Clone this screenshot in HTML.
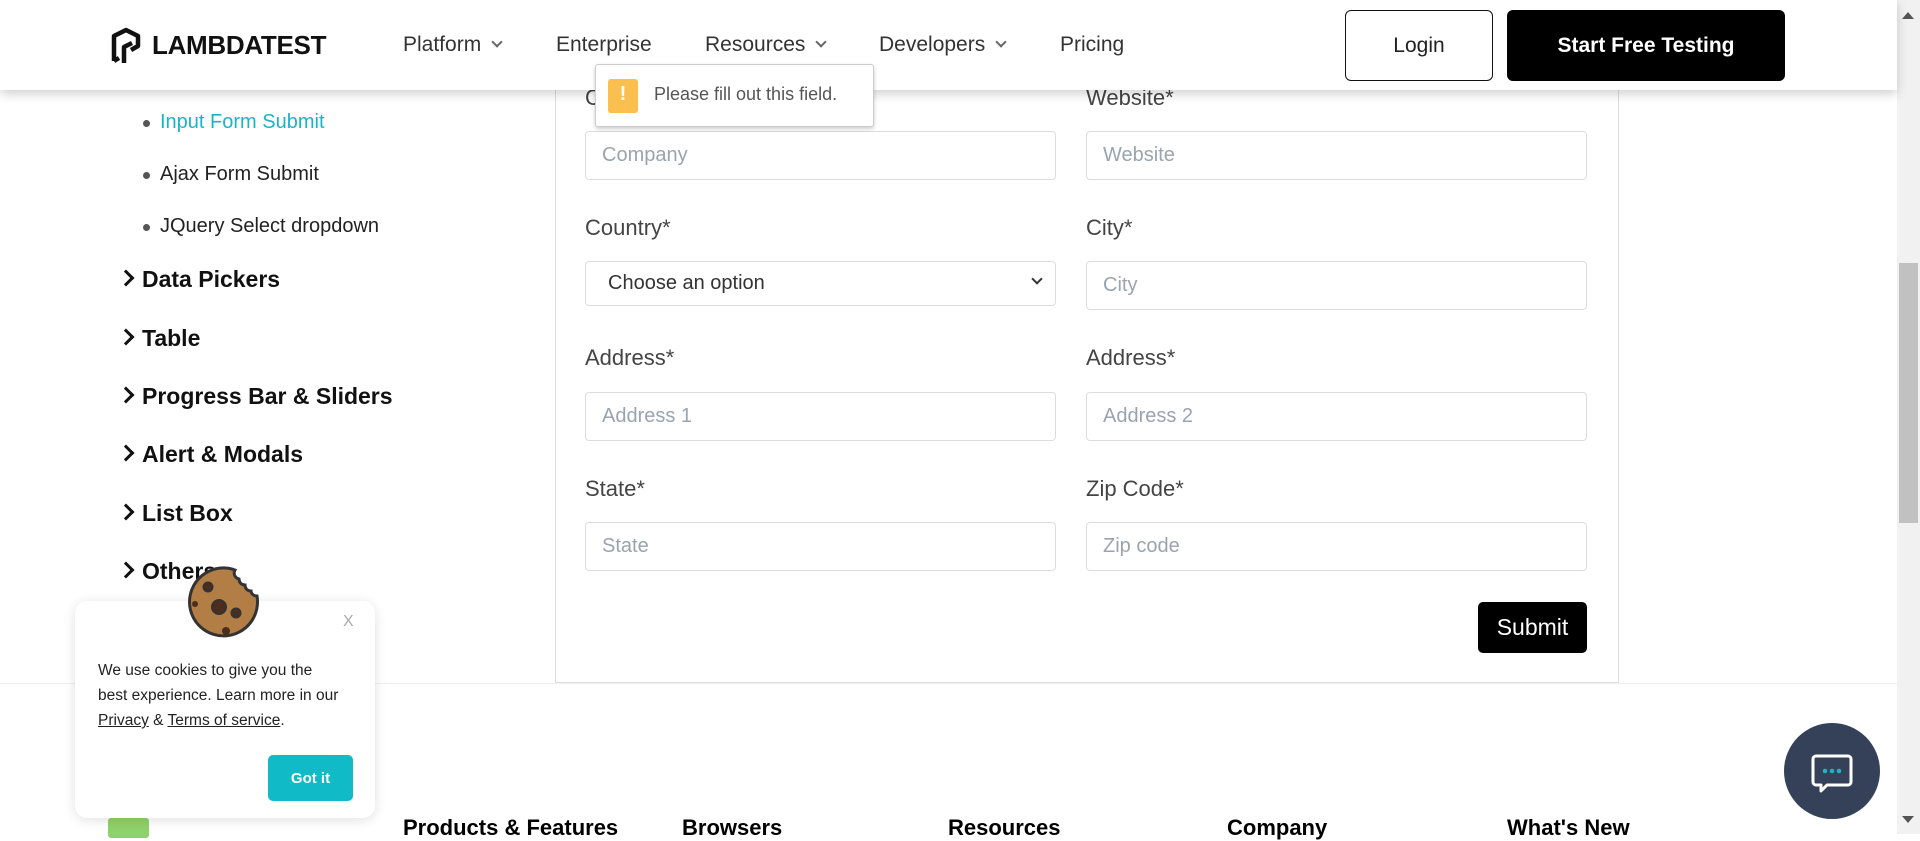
<!DOCTYPE html>
<html><head><meta charset="utf-8"><style>
*{box-sizing:border-box;margin:0;padding:0}
body{width:1920px;height:834px;overflow:hidden;background:#fff;font-family:"Liberation Sans",sans-serif;position:relative;color:#111}
.abs{position:absolute}
header{position:absolute;left:0;top:0;width:1897px;height:90px;background:#fff;box-shadow:0 4px 10px rgba(0,0,0,.18);z-index:5}
.nav{position:absolute;top:33px;font-size:21px;color:#333}
.chev{display:inline-block;width:8px;height:8px;border-right:2px solid #666;border-bottom:2px solid #666;transform:rotate(45deg);margin-left:12px;position:relative;top:-5px}
.btn{position:absolute;top:10px;height:71px;border-radius:6px;display:flex;align-items:center;justify-content:center;font-size:21px}
.sb{position:absolute;left:143px;width:7px;height:7px;border-radius:50%;background:#555}
.si{position:absolute;left:160px;font-size:20px;color:#222}
.cat{position:absolute;left:120px;font-size:23px;font-weight:bold;color:#111}
.cat:before{content:"";display:inline-block;width:9px;height:9px;border-right:3px solid #111;border-top:3px solid #111;transform:rotate(45deg);margin-right:10px;position:relative;top:-3px}
.lbl{position:absolute;font-size:22px;color:#444}
.inp{position:absolute;height:49px;border:1px solid #ddd;border-radius:4px;font-size:20px;color:#9aa3b0;padding-left:16px;display:flex;align-items:center}
.fh{position:absolute;top:815px;font-size:22px;font-weight:bold;color:#000}
</style></head><body>
<header>
<svg class="abs" style="left:110px;top:27px" width="32" height="38" viewBox="0 0 32 38"><path d="M4 34V9L16 3l12 6v10l-7 4M4 34l5-3M14 36V20l8-4" fill="none" stroke="#111" stroke-width="4.5" stroke-linejoin="round"/></svg>
<div class="abs" style="left:152px;top:30px;font-size:26px;font-weight:bold;letter-spacing:-0.3px;color:#111">LAMBDATEST</div>
<div class="nav" style="left:403px">Platform<span class="chev"></span></div>
<div class="nav" style="left:556px">Enterprise</div>
<div class="nav" style="left:705px">Resources<span class="chev"></span></div>
<div class="nav" style="left:879px">Developers<span class="chev"></span></div>
<div class="nav" style="left:1060px">Pricing</div>
<div class="btn" style="left:1345px;width:148px;border:1.5px solid #111;color:#222">Login</div>
<div class="btn" style="left:1507px;width:278px;background:#000;color:#fff;font-weight:bold">Start Free Testing</div>
</header>
<div class="abs" style="left:1897px;top:0;width:23px;height:834px;background:#f1f1f1"></div>
<div class="abs" style="left:1899px;top:263px;width:19px;height:260px;background:#c1c1c1"></div>
<div class="abs" style="left:1902px;top:12px;border:6px solid transparent;border-bottom:7px solid #555;border-top:0"></div>
<div class="abs" style="left:1902px;top:816px;border:6px solid transparent;border-top:7px solid #555;border-bottom:0"></div>

<div class="sb" style="top:120px"></div><div class="si" style="top:111px;color:#1ab4c6">Input Form Submit</div>
<div class="sb" style="top:172px"></div><div class="si" style="top:163px">Ajax Form Submit</div>
<div class="sb" style="top:224px"></div><div class="si" style="top:215px">JQuery Select dropdown</div>
<div class="cat" style="top:266px">Data Pickers</div>
<div class="cat" style="top:325px">Table</div>
<div class="cat" style="top:383px">Progress Bar &amp; Sliders</div>
<div class="cat" style="top:441px">Alert &amp; Modals</div>
<div class="cat" style="top:500px">List Box</div>
<div class="cat" style="top:558px">Others</div>

<div class="abs" style="left:555px;top:60px;width:1064px;height:623px;border:1px solid #ddd;border-top:0"></div>
<div class="abs" style="left:0;top:683px;width:1897px;height:1px;background:#eee"></div>
<div class="lbl" style="left:585px;top:85px">Company*</div><div class="lbl" style="left:1086px;top:85px">Website*</div>
<div class="inp" style="left:585px;top:131px;width:471px">Company</div><div class="inp" style="left:1086px;top:131px;width:501px">Website</div>
<div class="lbl" style="left:585px;top:215px">Country*</div><div class="lbl" style="left:1086px;top:215px">City*</div>
<div class="inp" style="left:585px;top:261px;width:471px;height:45px;color:#333;padding-left:22px">Choose an option<span style="position:absolute;right:14px;top:13px;width:8px;height:8px;border-right:2px solid #333;border-bottom:2px solid #333;transform:rotate(45deg)"></span></div>
<div class="inp" style="left:1086px;top:261px;width:501px">City</div>
<div class="lbl" style="left:585px;top:345px">Address*</div><div class="lbl" style="left:1086px;top:345px">Address*</div>
<div class="inp" style="left:585px;top:392px;width:471px">Address 1</div><div class="inp" style="left:1086px;top:392px;width:501px">Address 2</div>
<div class="lbl" style="left:585px;top:476px">State*</div><div class="lbl" style="left:1086px;top:476px">Zip Code*</div>
<div class="inp" style="left:585px;top:522px;width:471px">State</div><div class="inp" style="left:1086px;top:522px;width:501px">Zip code</div>
<div class="abs" style="left:1478px;top:602px;width:109px;height:51px;background:#000;border-radius:5px;color:#fff;font-size:23px;display:flex;align-items:center;justify-content:center">Submit</div>

<div class="abs" style="left:595px;top:64px;width:279px;height:63px;background:#fff;border:1px solid #ccc;border-radius:3px;box-shadow:0 2px 4px rgba(0,0,0,.2);z-index:6">
<div class="abs" style="left:12px;top:14px;width:30px;height:34px;background:#fbbf4f;border-radius:3px;color:#fff;font-weight:bold;text-align:center;font-size:20px;line-height:30px">!</div>
<div class="abs" style="left:58px;top:19px;font-size:18px;color:#555">Please fill out this field.</div></div>

<div class="fh" style="left:403px">Products &amp; Features</div>
<div class="fh" style="left:682px">Browsers</div>
<div class="fh" style="left:948px">Resources</div>
<div class="fh" style="left:1227px">Company</div>
<div class="fh" style="left:1507px">What's New</div>
<div class="abs" style="left:108px;top:818px;width:41px;height:20px;background:#8fd16a;border-radius:3px"></div>

<div class="abs" style="left:75px;top:601px;width:300px;height:217px;background:#fff;border-radius:12px;box-shadow:0 2px 12px rgba(0,0,0,.12);z-index:7">
<div class="abs" style="left:268px;top:12px;font-size:16px;color:#aaa">X</div>
<div class="abs" style="left:23px;top:57px;font-size:15.5px;line-height:25px;color:#222;white-space:nowrap">We use cookies to give you the<br>best experience. Learn more in our<br><u>Privacy</u> &amp; <u>Terms of service</u>.</div>
<div class="abs" style="left:193px;top:154px;width:85px;height:46px;background:#10bac6;border-radius:5px;color:#fff;font-weight:bold;font-size:15px;display:flex;align-items:center;justify-content:center">Got it</div>
</div>
<svg class="abs" style="left:186px;top:563px;z-index:8" width="78" height="78" viewBox="0 0 78 78"><path d="M40 5a34 34 0 1 0 31 28c-4 0-6-3-6-5-3 0-6-2-6-6-4 0-6-3-6-6-4-1-6-5-4-9-3-1-6-2-9-2z" fill="#b27e45" stroke="#333" stroke-width="3"/><circle cx="33" cy="44" r="7" fill="#4b2e1d" stroke="#333" stroke-width="2"/><circle cx="22" cy="24" r="4.5" fill="#4b2e1d" stroke="#333" stroke-width="2"/><circle cx="50" cy="50" r="4.5" fill="#4b2e1d" stroke="#333" stroke-width="2"/><circle cx="9" cy="41" r="3" fill="#4b2e1d"/><circle cx="40" cy="68" r="4" fill="#4b2e1d"/></svg>

<div class="abs" style="left:1784px;top:723px;width:96px;height:96px;border-radius:50%;background:#344159">
<svg class="abs" style="left:26px;top:30px" width="44" height="40" viewBox="0 0 44 40"><path d="M6 3h32a3 3 0 0 1 3 3v23a3 3 0 0 1-3 3H17l-6 6v-6H6a3 3 0 0 1-3-3V6a3 3 0 0 1 3-3z" fill="none" stroke="#fff" stroke-width="3" stroke-linejoin="round"/><circle cx="15" cy="18" r="2.3" fill="#1ab4c6"/><circle cx="22" cy="18" r="2.3" fill="#1ab4c6"/><circle cx="29" cy="18" r="2.3" fill="#1ab4c6"/></svg></div>
</body></html>
